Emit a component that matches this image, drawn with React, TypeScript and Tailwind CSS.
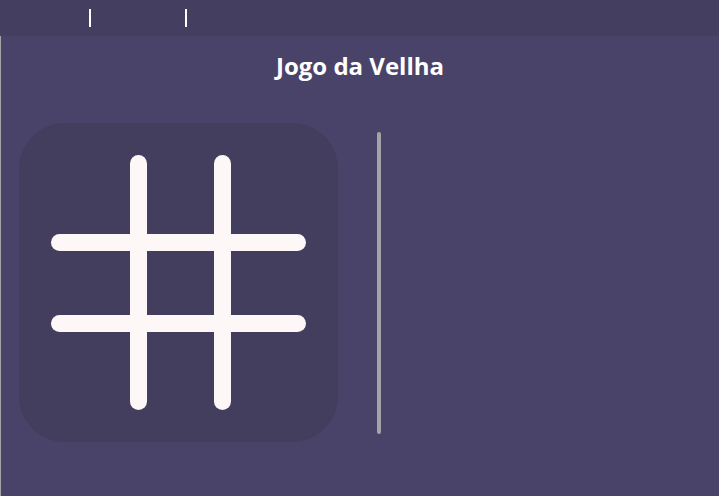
export default function App() {
  return (
    <div className="w-[719px] h-[496px] flex flex-col bg-[#4a4369] font-['Open_Sans',sans-serif] overflow-hidden">
      {/* barra superior */}
      <div className="h-9 shrink-0 bg-[#443f61] flex items-center">
        <span className="ml-[89px] w-[2px] h-[18px] bg-white" />
        <span className="ml-[94px] w-[2px] h-[18px] bg-white" />
      </div>

      <main className="flex-1 border-l border-[#a3a3a8] flex flex-col">
        <h1 className="text-center text-white font-bold text-[24px] leading-[32px] mt-[14px]">
          Jogo da Vellha
        </h1>

        <div className="flex items-center mt-[41px] ml-[18px]">
          <div className="w-[319px] h-[319px] rounded-[46px] bg-[#433d5e] shrink-0">
            <svg width="319" height="319" viewBox="0 0 319 319">
              <g stroke="#fdf7f7" strokeWidth="17" strokeLinecap="round">
                <line x1="119.5" y1="40.5" x2="119.5" y2="278.5" />
                <line x1="203.5" y1="40.5" x2="203.5" y2="278.5" />
                <line x1="40.5" y1="119.5" x2="278.5" y2="119.5" />
                <line x1="40.5" y1="200.5" x2="278.5" y2="200.5" />
              </g>
            </svg>
          </div>
          <div className="ml-[39px] w-1 h-[302px] rounded-full bg-[#a3a3a8]" />
        </div>
      </main>
    </div>
  );
}
